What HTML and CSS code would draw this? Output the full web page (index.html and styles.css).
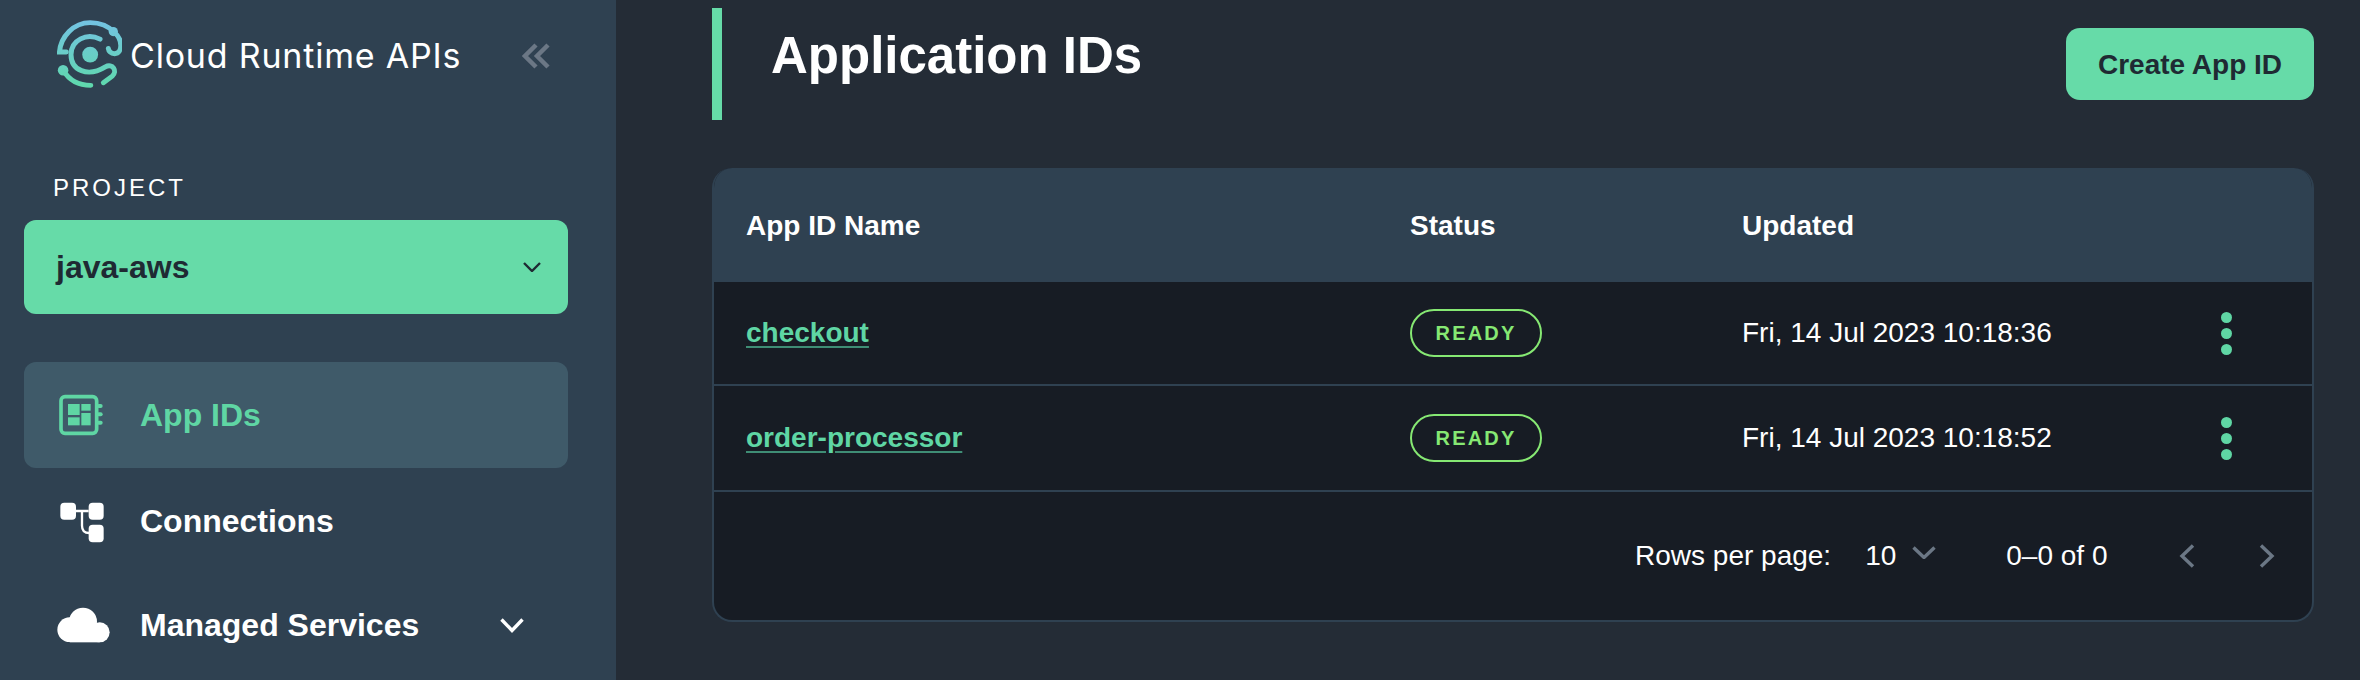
FILE: index.html
```html
<!DOCTYPE html>
<html lang="en">
<head>
<meta charset="utf-8">
<title>Application IDs</title>
<link rel="stylesheet" href="styles.css">
</head>
<body>
<div class="app">
  <aside class="sidebar">
    <div class="brand">
      <svg class="logo" viewBox="50 30 196 206" fill="none" stroke-linecap="round">
        <defs>
          <linearGradient id="lg" gradientUnits="userSpaceOnUse" x1="150" y1="30" x2="150" y2="236">
            <stop offset="0" stop-color="#74c3e3"/>
            <stop offset="1" stop-color="#5ed9ab"/>
          </linearGradient>
        </defs>
        <circle cx="150" cy="135" r="24" fill="url(#lg)"/>
        <path d="M78 127H57C61 80 100 38 150 38C180 38 205 48 224 68C248 88 250 130 224 132C212 132 206 124 205 116" stroke="url(#lg)" stroke-width="15"/>
        <circle cx="220" cy="65" r="14" fill="url(#lg)"/>
        <path d="M180 88C140 68 92 90 92 135C92 182 142 205 196 172C218 160 234 185 217 200L190 220" stroke="url(#lg)" stroke-width="15"/>
        <circle cx="68" cy="182" r="16" fill="url(#lg)"/>
        <path d="M68 182C85 210 115 228 152 228" stroke="url(#lg)" stroke-width="15"/>
      </svg>
      <span class="brand-name">Cloud Runtime APIs</span>
      <svg class="collapse" viewBox="0 0 28 26" fill="none" stroke="#6b7785" stroke-width="4.5">
        <path d="M14 2 3 13l11 11"/>
        <path d="M26 2 15 13l11 11"/>
      </svg>
    </div>
    <div class="project-label">PROJECT</div>
    <div class="project-select">
      <span>java-aws</span>
      <svg class="project-chevron" viewBox="0 0 18 10" fill="none" stroke="#1f2a33" stroke-width="2.4"><path d="M1 1l8 8 8-8"/></svg>
    </div>
    <nav class="nav">
      <a class="nav-item active">
        <svg class="nav-icon" viewBox="53 40 150 130" fill="#5fd6a4">
          <rect x="65" y="50" width="107" height="110" rx="12" fill="none" stroke="#5fd6a4" stroke-width="11"/>
          <rect x="86" y="72" width="35" height="33"/>
          <rect x="126" y="72" width="28" height="20"/>
          <rect x="86" y="112" width="35" height="24"/>
          <rect x="126" y="99" width="28" height="37"/>
          <rect x="172" y="72" width="18" height="12" rx="6"/>
          <rect x="172" y="97" width="18" height="12" rx="6"/>
          <rect x="172" y="122" width="18" height="12" rx="6"/>
        </svg>
        <span>App IDs</span>
      </a>
      <a class="nav-item">
        <svg class="nav-icon" viewBox="50 37 150 130" fill="#fff">
          <rect x="60" y="47" width="47" height="51" rx="12"/>
          <rect x="145" y="47" width="45" height="51" rx="12"/>
          <rect x="145" y="113" width="45" height="53" rx="12"/>
          <path d="M107 72h38M125 72v44c0 14 8 22 22 22" fill="none" stroke="#fff" stroke-width="7"/>
        </svg>
        <span>Connections</span>
      </a>
      <a class="nav-item">
        <svg class="nav-icon" viewBox="47 40 150 130" fill="#fff">
          <circle cx="85" cy="119" r="37"/>
          <circle cx="125" cy="95" r="42"/>
          <circle cx="175" cy="127" r="30"/>
          <rect x="85" y="110" width="90" height="47"/>
        </svg>
        <span>Managed Services</span>
        <svg class="nav-chevron" viewBox="0 0 24 15" fill="none" stroke="#fff" stroke-width="3.4"><path d="M1.500 1.500 12 12.500 22.500 1.500"/></svg>
      </a>
    </nav>
  </aside>
  <main class="main">
    <header class="page-head">
      <h1 class="title">Application IDs</h1>
      <button class="create-btn">Create App ID</button>
    </header>
    <section class="table">
      <div class="row head">
        <div class="cell">App ID Name</div>
        <div class="cell">Status</div>
        <div class="cell">Updated</div>
        <div class="cell"></div>
      </div>
      <div class="row body first">
        <div class="cell"><a class="link">checkout</a></div>
        <div class="cell"><span class="chip">READY</span></div>
        <div class="cell">Fri, 14 Jul 2023 10:18:36</div>
        <div class="cell kebab"><i></i><i></i><i></i></div>
      </div>
      <div class="row body">
        <div class="cell"><a class="link">order-processor</a></div>
        <div class="cell"><span class="chip">READY</span></div>
        <div class="cell">Fri, 14 Jul 2023 10:18:52</div>
        <div class="cell kebab"><i></i><i></i><i></i></div>
      </div>
      <div class="pager">
        <span class="rows-label">Rows per page:</span>
        <span class="rows-value">10</span>
        <svg class="rows-chevron" viewBox="0 0 24 13" fill="none" stroke="#6b7785" stroke-width="3.4"><path d="M1.500 1.500 12 11.500 22.500 1.500"/></svg>
        <span class="range">0–0 of 0</span>
        <svg class="page-arrow" viewBox="0 0 16 24" fill="none" stroke="#6b7785" stroke-width="3.4"><path d="M14 1.500 3 12l11 10.500"/></svg>
        <svg class="page-arrow next" viewBox="0 0 16 24" fill="none" stroke="#6b7785" stroke-width="3.4"><path d="M2 1.500 13 12 2 22.500"/></svg>
      </div>
    </section>
  </main>
</div>
</body>
</html>
```
FILE: styles.css
```css
* { box-sizing: border-box; }
html, body { margin: 0; height: 100%; }
body {
  background: #242c36;
  color: #fff;
  font-family: "Liberation Sans", Arial, sans-serif;
  overflow: hidden;
}
.app { display: flex; height: 680px; }

.sidebar {
  width: 616px;
  flex: none;
  background: #2f4151;
  padding: 20px 48px 0 24px;
}
.brand { display: flex; align-items: flex-start; height: 68px; padding-left: 33px; }
.logo { width: 65px; height: 68px; flex: none; }
.brand-name {
  font-family: Inter, "Liberation Sans", sans-serif;
  font-size: 34px;
  line-height: 38px;
  letter-spacing: 0.800px;
  margin: 17px 0 0 8px;
  white-space: nowrap;
  width: 392px;
  flex: none;
}
.collapse { width: 28px; height: 26px; flex: none; margin: 23px 0 0 0; }

.project-label {
  font-size: 24px;
  line-height: 28px;
  letter-spacing: 3px;
  margin: 86px 0 0 29px;
  height: 46px;
}
.project-select {
  height: 94px;
  background: #66dba8;
  border-radius: 12px;
  color: #1f2a33;
  font-weight: 700;
  font-size: 32px;
  display: flex;
  align-items: center;
  justify-content: space-between;
  padding: 0 27px 0 32px;
}
.project-chevron { width: 18px; height: 10px; }

.nav { display: flex; flex-direction: column; margin-top: 48px; }
.nav-item {
  height: 106px;
  border-radius: 12px;
  display: flex;
  align-items: center;
  font-size: 32px;
  font-weight: 700;
  padding-left: 33px;
}
.nav-item.active { background: #3f5a69; color: #5fd6a4; }
.nav-item:last-child { margin-top: -2px; }
.nav-icon { width: 50px; height: 44px; flex: none; margin-right: 33px; overflow: visible; }
.nav-chevron { width: 24px; height: 15px; margin-left: 81px; }

.main { flex: 1; padding: 8px 46px 0 96px; }
.page-head { display: flex; justify-content: space-between; align-items: flex-start; height: 160px; }
.title {
  margin: 0;
  height: 112px;
  border-left: 10px solid #66dba8;
  padding: 19px 0 0 49px;
  font-size: 51px;
  line-height: 58px;
  font-weight: 700;
}
.create-btn {
  width: 248px;
  height: 72px;
  margin-top: 20px;
  padding: 2px 0 0;
  background: #66dba8;
  color: #1f2a33;
  border: 0;
  border-radius: 14px;
  font: 700 28px "Liberation Sans", Arial, sans-serif;
}

.table {
  height: 454px;
  background: #171c24;
  border: 2px solid #2f4151;
  border-top: 0;
  border-radius: 20px;
  overflow: hidden;
}
.row { display: grid; grid-template-columns: 664px 331px 464px 1fr; align-items: center; }
.cell { padding-left: 32px; font-size: 28px; white-space: nowrap; }
.row .cell:nth-child(3) { padding-left: 33px; }
.head { height: 114px; padding-top: 2px; background: #2f4151; font-weight: 700; }
.body { height: 106px; border-bottom: 2px solid #2f4151; }
.body.first { height: 104px; }
.link { color: #5fd6a4; font-weight: 700; text-decoration: underline; text-decoration-color: #3f8d75; text-underline-offset: 4px; }
.chip {
  display: inline-flex;
  align-items: center;
  justify-content: center;
  width: 132px;
  height: 48px;
  border: 2px solid #86e873;
  border-radius: 24px;
  color: #86e873;
  font-size: 20px;
  font-weight: 700;
  letter-spacing: 2.200px;
}
.kebab { display: flex; flex-direction: column; align-items: center; gap: 5px; padding: 0; width: 11px; margin-left: 48px; }
.kebab i { width: 11px; height: 11px; border-radius: 50%; background: #5fd6a4; }

.pager { height: 128px; display: flex; align-items: center; justify-content: flex-end; font-size: 28px; padding: 0 37px 0 0; color: #fff; }
.rows-value { margin-left: 34px; }
.rows-chevron { width: 24px; height: 13px; margin: -8px 0 0 15.500px; }
.range { margin: 0 71.500px 0 70.500px; }
.page-arrow { width: 16px; height: 24px; }
.page-arrow.next { margin-left: 64px; }
```
